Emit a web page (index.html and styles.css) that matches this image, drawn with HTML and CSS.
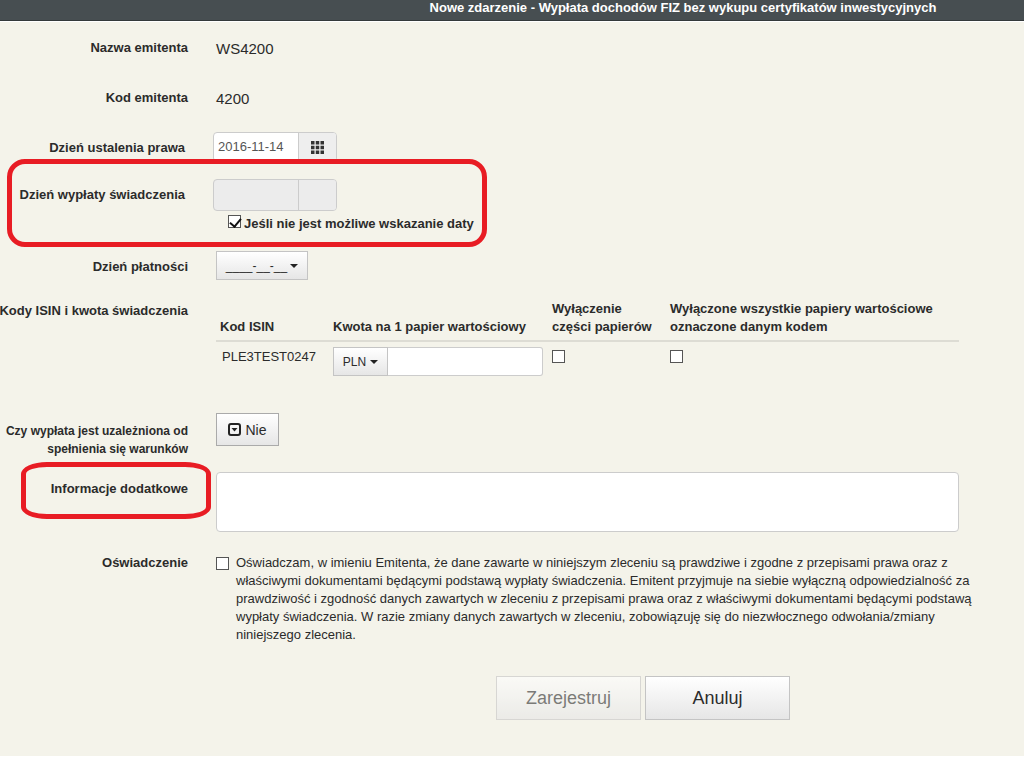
FILE: index.html
```html
<!DOCTYPE html>
<html lang="pl">
<head>
<meta charset="utf-8">
<title>Nowe zdarzenie</title>
<link rel="stylesheet" href="styles.css">
</head>
<body>
<header class="topbar"><h1 class="title">Nowe zdarzenie - Wypłata dochodów FIZ bez wykupu certyfikatów inwestycyjnych</h1></header>
<form class="form">
  <div class="row row-value">
    <span class="label">Nazwa emitenta</span>
    <div class="field value">WS4200</div>
  </div>
  <div class="row row-value">
    <span class="label">Kod emitenta</span>
    <div class="field value">4200</div>
  </div>
  <div class="row row-date row-inset">
    <label class="label" for="record-date">Dzień ustalenia prawa</label>
    <div class="field">
      <div class="date-group">
        <input class="date-input" id="record-date" type="text" value="2016-11-14">
        <button class="date-btn" type="button" aria-label="Kalendarz">
          <svg width="13" height="13" viewBox="0 0 13 13" fill="#333"><path d="M0 0h3.5v3.5H0zM4.75 0h3.5v3.5h-3.5zM9.5 0H13v3.5H9.5zM0 4.75h3.5v3.5H0zM4.75 4.75h3.5v3.5h-3.5zM9.5 4.75H13v3.5H9.5zM0 9.5h3.5V13H0zM4.75 9.5h3.5V13h-3.5zM9.5 9.5H13V13H9.5z"/></svg>
        </button>
      </div>
    </div>
  </div>
  <div class="row row-payout row-inset">
    <label class="label" for="payout-date">Dzień wypłaty świadczenia</label>
    <div class="field">
      <div class="date-group disabled">
        <input class="date-input" id="payout-date" type="text" disabled>
        <button class="date-btn" type="button" aria-label="Kalendarz" disabled></button>
      </div>
      <label class="no-date"><input class="check" type="checkbox" checked>Jeśli nie jest możliwe wskazanie daty</label>
    </div>
    <span class="mark mark-wide"></span>
  </div>
  <div class="row row-payment">
    <span class="label">Dzień płatności</span>
    <div class="field"><button class="btn btn-date" type="button">____-__-__<span class="caret"></span></button></div>
  </div>
  <div class="row row-codes">
    <span class="label">Kody ISIN i kwota świadczenia</span>
    <div class="field">
      <table class="codes">
        <thead><tr>
          <th class="col-code">Kod ISIN</th>
          <th class="col-amount">Kwota na 1 papier wartościowy</th>
          <th class="col-part">Wyłączenie<br>części papierów</th>
          <th>Wyłączone wszystkie papiery wartościowe<br>oznaczone danym kodem</th>
        </tr></thead>
        <tbody><tr>
          <td class="code">PLE3TEST0247</td>
          <td><div class="amount"><button class="btn btn-currency" type="button">PLN<span class="caret"></span></button><input class="amount-input" type="text" aria-label="Kwota"></div></td>
          <td><input class="check" type="checkbox" aria-label="Wyłączenie części papierów"></td>
          <td><input class="check" type="checkbox" aria-label="Wyłączone wszystkie papiery"></td>
        </tr></tbody>
      </table>
    </div>
  </div>
  <div class="row row-condition">
    <span class="label"><span>Czy wypłata jest uzależniona od</span><span>spełnienia się warunków</span></span>
    <div class="field"><button class="btn btn-toggle" type="button"><svg width="13" height="13" viewBox="0 0 13 13"><rect x="1" y="1" width="11" height="11" rx="2" fill="none" stroke="#222" stroke-width="2"/><path d="M3.5 5h6l-3 3.5z" fill="#222"/></svg>Nie</button></div>
  </div>
  <div class="row row-info">
    <label class="label" for="info">Informacje dodatkowe</label>
    <div class="field"><textarea class="info" id="info"></textarea></div>
    <span class="mark mark-small"></span>
  </div>
  <div class="row row-statement">
    <span class="label">Oświadczenie</span>
    <label class="field statement"><input class="check" type="checkbox"><span>Oświadczam, w imieniu Emitenta, że dane zawarte w niniejszym zleceniu są prawdziwe i zgodne z przepisami prawa oraz z<br>właściwymi dokumentami będącymi podstawą wypłaty świadczenia. Emitent przyjmuje na siebie wyłączną odpowiedzialność za<br>prawdziwość i zgodność danych zawartych w zleceniu z przepisami prawa oraz z właściwymi dokumentami będącymi podstawą<br>wypłaty świadczenia. W razie zmiany danych zawartych w zleceniu, zobowiązuję się do niezwłocznego odwołania/zmiany<br>niniejszego zlecenia.</span></label>
  </div>
  <div class="actions">
    <button class="btn btn-large" type="submit" disabled>Zarejestruj</button>
    <button class="btn btn-large" type="button">Anuluj</button>
  </div>
</form>
</body>
</html>
```
FILE: styles.css
```css
* { box-sizing: border-box; }
body { margin: 0; background: #fff; color: #2b2b2b; font: 13px/18px "Liberation Sans", Arial, sans-serif; overflow-x: hidden; }
button, input, textarea { font: inherit; color: inherit; margin: 0; }
.topbar { height: 21px; padding-left: 342px; background: #474e51; border-bottom: 1px solid #34393b; overflow: hidden; }
.title { margin: 0; color: #fff; font-size: 13px; line-height: 16px; text-align: center; }
.form { padding: 10px 65px 36px 0; background: #f4f3ea; border-top: 1px solid #fff; }
.row { display: grid; grid-template-columns: 188px minmax(0, 1fr); column-gap: 28px; position: relative; }
.row-inset { grid-template-columns: 185px minmax(0, 1fr); }
.label { display: flex; flex-direction: column; align-items: flex-end; font-weight: bold; white-space: nowrap; padding-top: 7px; }
.row-value { min-height: 50px; }
.value { font-size: 15px; padding-top: 8px; }
.row-date { min-height: 47px; }
.row-payout { min-height: 72px; }
.row-payment { min-height: 49px; }
.row-codes { min-height: 113px; }
.row-codes .label { padding-top: 2px; }
.row-condition { min-height: 59px; }
.row-condition .label { padding-top: 9px; font-size: 12px; }
.row-info { min-height: 81px; }
.row-info .label { padding-top: 8px; }
.row-statement .label { padding-top: 1px; }

.date-group { display: flex; width: 124px; height: 32px; border: 1px solid #ccc; border-radius: 4px; background: #fff; overflow: hidden; }
.row-date .date-group { height: 30px; }
.date-input { width: 85px; padding: 0 4px; border: 0; border-right: 1px solid #ccc; background: transparent; color: #555; }
.date-btn { flex: 1; padding: 0; border: 0; background: #eee; display: flex; align-items: center; justify-content: center; }
.disabled, .disabled .date-btn { background: #ececec; }
.no-date { display: flex; gap: 3px; padding: 4px 0 0 15px; font-weight: bold; white-space: nowrap; }

.check { appearance: none; flex: none; display: block; width: 13px; height: 13px; border: 1px solid #555; background: #fff; }
.check:checked::before { content: ""; display: block; width: 5px; height: 9px; margin: 0 0 0 3px; border: solid #111; border-width: 0 2px 2px 0; transform: rotate(40deg); }

.btn { display: flex; align-items: center; justify-content: center; border: 1px solid #c4c4c4; background: linear-gradient(#fff, #e6e6e6); padding: 0; }
.caret { border: 4px solid transparent; border-top-color: #222; border-bottom: 0; }
.btn-date { width: 92px; height: 29px; gap: 3px; font-size: 12px; }
.btn-currency { width: 55px; height: 29px; gap: 4px; font-size: 12px; }
.btn-toggle { width: 63px; height: 33px; gap: 4px; border-color: #aaa; font-size: 14px; }
.btn-large { width: 145px; height: 44px; font-size: 18px; }
.btn-large:disabled { opacity: .6; }

.codes { width: 100%; border-collapse: collapse; table-layout: fixed; }
.codes th { padding: 0 4px 4px; text-align: left; vertical-align: bottom; border-bottom: 2px solid #dddcd4; white-space: nowrap; }
.codes td { padding: 5px 0 0 4px; vertical-align: top; }
.codes td .check { margin-top: 3px; }
.col-code { width: 113px; }
.col-amount { width: 219px; }
.col-part { width: 118px; }
.codes .code { padding: 6px 0 0 6px; }
.amount { display: flex; width: 210px; }
.amount-input { flex: 1; min-width: 0; height: 29px; border: 1px solid #ccc; border-left: 0; border-radius: 0 3px 3px 0; background: #fff; }

.info { display: block; width: 100%; height: 60px; border: 1px solid #ccc; border-radius: 4px; background: #fff; resize: none; }
.statement { display: flex; gap: 7px; padding-top: 1px; white-space: nowrap; }
.statement .check { margin-top: 3px; }
.actions { display: flex; justify-content: center; gap: 4px; padding: 32px 0 0 327px; }

/* Red outlines around the fields that need attention */
.mark { position: absolute; border: 5px solid #e81c24; pointer-events: none; }
.mark-wide { left: 7px; top: -20px; width: 480px; height: 88px; border-radius: 18px; }
.mark-small { left: 21px; top: -10px; width: 190px; height: 57px; border-radius: 26px / 12px; }
```
